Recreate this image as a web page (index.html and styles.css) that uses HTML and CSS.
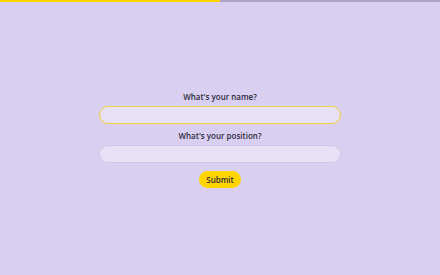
FILE: index.html
```html
<!DOCTYPE html>
<html lang="en">
<head>
<meta charset="UTF-8" />
<meta name="viewport" content="width=device-width, initial-scale=1" />
<title>Quiz</title>
<link rel="stylesheet" href="styles.css">
</head>
<body>
  <div class="progress">
    <div class="progress-fill" style="width: 50%"></div>
  </div>
  <form class="form">
    <label class="titulo" for="name">What's your name?</label>
    <input class="campo focado" id="name" type="text" />
    <label class="titulo" for="position">What's your position?</label>
    <input class="campo" id="position" type="text" />
    <button type="button" class="btn">Submit</button>
  </form>
</body>
</html>
```

FILE: styles.css
```css
* {
  box-sizing: border-box;
}
body {
  margin: 0;
  background: #d9d0f1;
  color: #2e2a3c;
  font-family: 'Open Sans', sans-serif;
  min-height: 100vh;
}
.progress {
  height: 2px;
  background: #aba4c6;
}
.progress-fill {
  height: 100%;
  background: #ffd200;
}
.form {
  width: 242px;
  margin: 0 auto;
  padding-top: 88px;
  display: flex;
  flex-direction: column;
  align-items: center;
}
.titulo {
  font-size: 8px;
  font-weight: 600;
  line-height: 13px;
  margin-bottom: 3px;
}
.campo {
  width: 100%;
  height: 18px;
  border-radius: 9px;
  border: 1px solid #d0c8e8;
  background: #e6e1f5;
  outline: none;
  margin: 0 0 5px 0;
  font-family: inherit;
}
.campo.focado {
  border: 1.5px solid #f2d23a;
}
.btn {
  margin-top: 3px;
  height: 17px;
  width: 42px;
  padding: 0;
  border: none;
  border-radius: 9px;
  background: #ffd400;
  color: #2e2a3c;
  font-family: inherit;
  font-size: 8px;
  font-weight: 600;
  cursor: pointer;
}
```
